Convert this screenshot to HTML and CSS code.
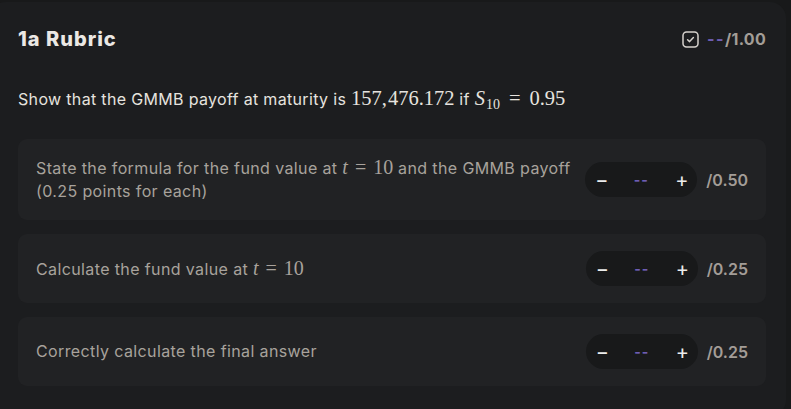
FILE: index.html
```html
<!DOCTYPE html>
<html>
<head>
<meta charset="utf-8">
<link rel="stylesheet" href="styles.css">
</head>
<body>
<div class="card">
  <div class="header">
    <h1 class="title">1a Rubric</h1>
    <div class="total">
      <svg class="check" width="17" height="17" viewBox="0 0 17 17"><rect x="1" y="1" width="15" height="15" rx="3.5" fill="none" stroke="#d6d2cd" stroke-width="1.5"/><path d="M5.6 8.7 L7.6 10.6 L11.4 6.6" fill="none" stroke="#d6d2cd" stroke-width="1.5" stroke-linecap="round" stroke-linejoin="round"/></svg>
      <span class="dash">--</span><span class="max">/1.00</span>
    </div>
  </div>
  <p class="prompt">Show that the GMMB payoff at maturity is <span class="m">157<span class="p">,</span>476.172</span> if <span class="m"><i>S</i><sub>10</sub><span class="eq">=</span>0.95</span></p>
  <div class="items">
    <div class="item">
      <div class="desc">State the formula for the fund value at <span class="m"><i>t</i><span class="eq">=</span>10</span> and the GMMB payoff<br>(0.25 points for each)</div>
      <div class="stepper"><span class="btn">−</span><span class="val">--</span><span class="btn">+</span></div>
      <div class="pts">/0.50</div>
    </div>
    <div class="item">
      <div class="desc">Calculate the fund value at <span class="m"><i>t</i><span class="eq">=</span>10</span></div>
      <div class="stepper"><span class="btn">−</span><span class="val">--</span><span class="btn">+</span></div>
      <div class="pts">/0.25</div>
    </div>
    <div class="item">
      <div class="desc">Correctly calculate the final answer</div>
      <div class="stepper"><span class="btn">−</span><span class="val">--</span><span class="btn">+</span></div>
      <div class="pts">/0.25</div>
    </div>
  </div>
</div>
</body>
</html>
```
FILE: styles.css
```css
html, body {
  margin: 0;
  padding: 0;
  background: #18191a;
  font-family: Inter, Roboto, "Liberation Sans", sans-serif;
}
body { padding-top: 2px; overflow: hidden; }
.card {
  margin-left: -10px;
  width: 796px;
  background: #1c1d1f;
  border-radius: 16px;
  padding: 20px 20px 30px 28px;
  box-sizing: border-box;
}
.header {
  display: flex;
  justify-content: space-between;
  align-items: center;
  height: 34px;
}
.title {
  margin: 0;
  font-family: Inter, "Noto Sans", sans-serif;
  font-weight: 800;
  font-size: 20px;
  letter-spacing: 1px;
  color: #ebe8e4;
}
.total {
  display: flex;
  align-items: center;
  font-size: 16px;
  font-weight: 700;
  letter-spacing: 0.3px;
}
.check { margin-right: 8px; }
.dash { color: #6d5db3; letter-spacing: 1.5px; }
.max { color: #a39d97; }
.prompt {
  margin: 30px 0 0;
  font-size: 16px;
  letter-spacing: 0.33px;
  line-height: 24px;
  color: #e6e3df;
}
.m {
  font-family: "Liberation Serif", "DejaVu Serif", serif;
  font-size: 20px;
  letter-spacing: 0;
}
.prompt .m { font-size: 20.5px; }
.m i { font-style: italic; }
.m .p { margin-right: 1px; }
.m .eq { margin: 0 7px; }
.prompt .m .eq { margin: 0 9px; }
.m sub { font-size: 14px; line-height: 0; vertical-align: -4px; margin-left: 1px; }
.items {
  margin-top: 28px;
  display: flex;
  flex-direction: column;
  gap: 14px;
}
.item {
  display: flex;
  align-items: center;
  background: #212224;
  border-radius: 9px;
  padding: 17px 18px 17px 18px;
  min-height: 35px;
}
.desc {
  flex: 1;
  font-size: 16px;
  letter-spacing: 0.38px;
  line-height: 23px;
  color: #a8a29c;
}
.desc .m { font-size: 20px; }
.stepper {
  width: 112px;
  height: 35px;
  background: #18191a;
  border-radius: 18px;
  display: flex;
  align-items: center;
  justify-content: space-between;
  padding: 0 10px;
  box-sizing: border-box;
  margin-left: 12px;
}
.btn {
  color: #ececec;
  font-size: 20px;
  font-weight: 400;
  width: 12px;
  text-align: center;
}
.val { color: #6d5db3; font-size: 14px; font-weight: 700; letter-spacing: 1px; }
.pts {
  margin-left: 9px;
  font-size: 16px;
  font-weight: 600;
  color: #a39d97;
}
```
